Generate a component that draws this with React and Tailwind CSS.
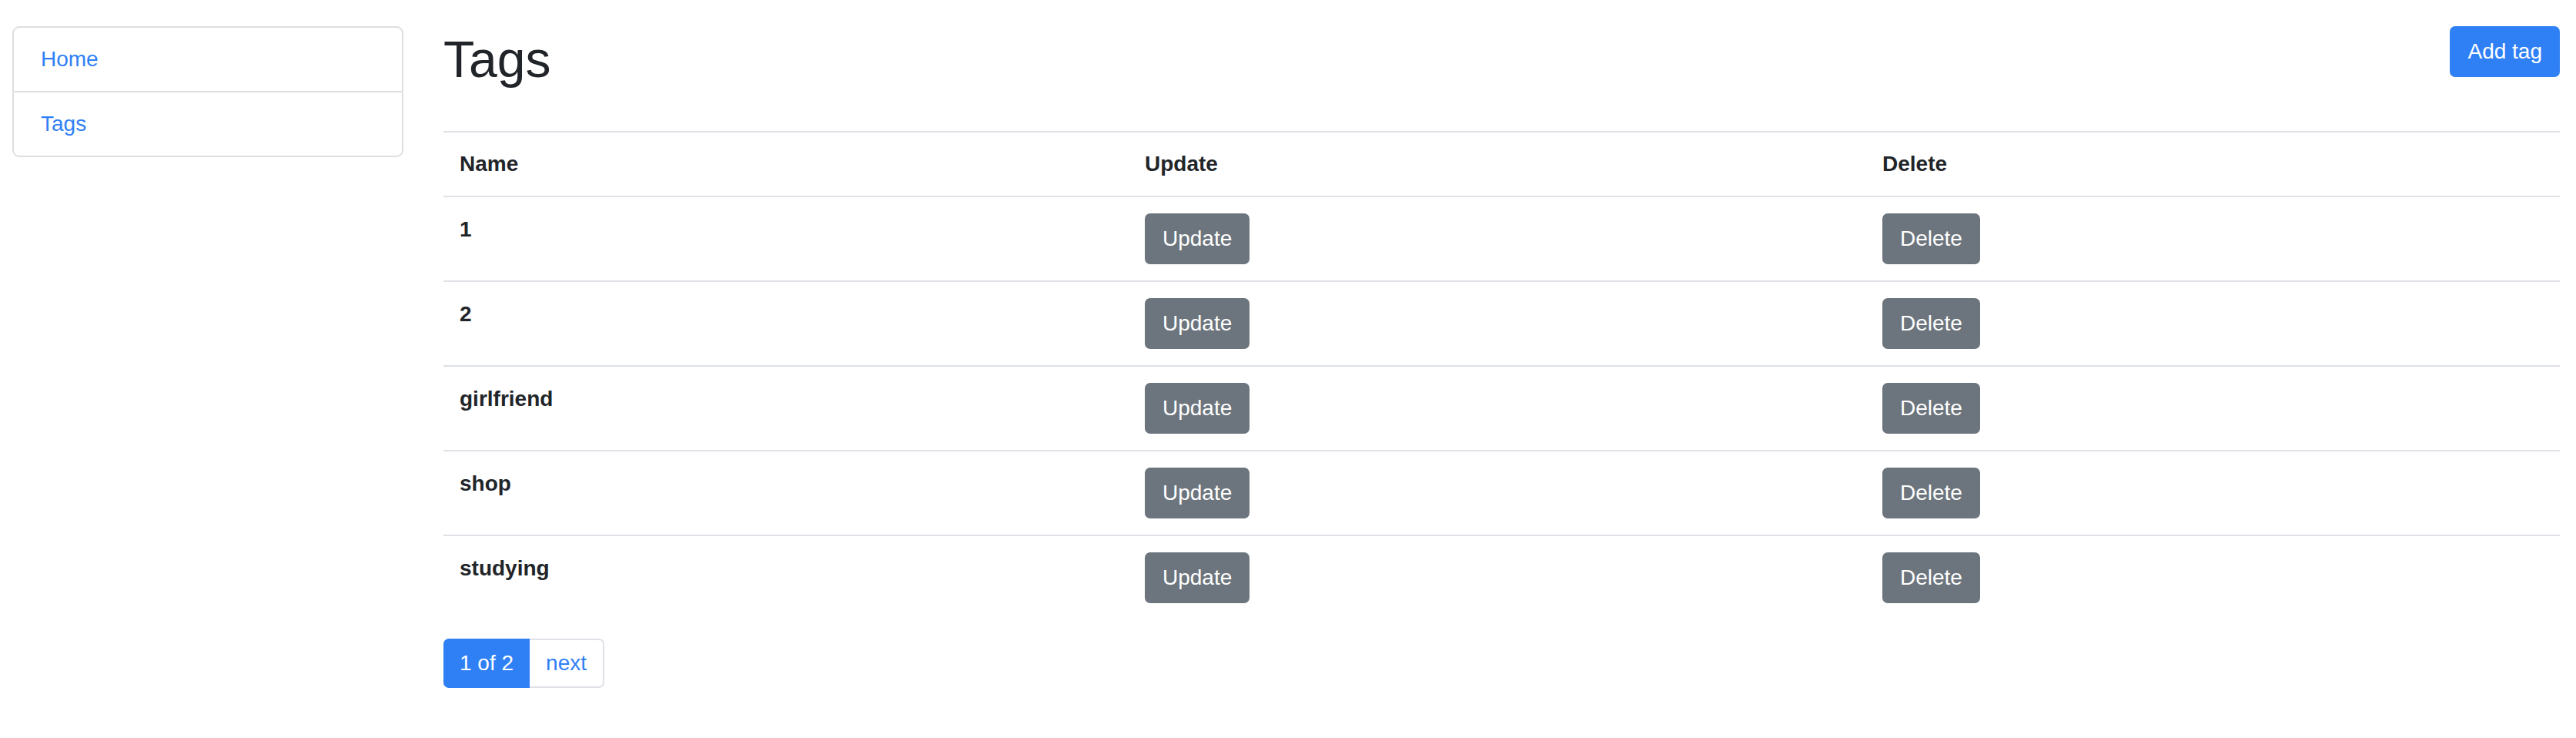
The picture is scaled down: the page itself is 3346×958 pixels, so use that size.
import React from 'react';

const tags = ["1", "2", "girlfriend", "shop", "studying"];

const App = () => {
  return (
    <div className="min-h-screen bg-white font-['Liberation_Sans',Arial,sans-serif] text-[#212529] text-[28px] leading-[42px]">
      <div className="flex gap-[52px] pl-[16px] pr-[21px] pt-[34px]">
        {/* sidebar */}
        <div className="w-[508px] shrink-0 self-start rounded-[9px] border-2 border-[#dfdfdf]">
          <a href="#" className="block px-[35px] py-[20px] text-[#3080f5]">Home</a>
          <a href="#" className="block border-t-2 border-[#dfdfdf] px-[35px] py-[20px] text-[#3080f5]">Tags</a>
        </div>

        {/* main */}
        <div className="flex-1">
          <div className="flex items-start justify-between">
            <h1 className="text-[66px] leading-[86px] font-medium">Tags</h1>
            <button className="h-[66px] rounded-[7px] border-2 border-[#3080f5] bg-[#3080f5] px-[21px] text-white">
              Add tag
            </button>
          </div>

          <table className="mt-[50px] w-full table-fixed border-collapse">
            <colgroup>
              <col className="w-[890px]" />
              <col className="w-[958px]" />
              <col />
            </colgroup>
            <thead>
              <tr>
                <th className="border-t-2 border-[#dee2e6] px-[21px] py-[20px] text-left font-bold">Name</th>
                <th className="border-t-2 border-[#dee2e6] px-[21px] py-[20px] text-left font-bold">Update</th>
                <th className="border-t-2 border-[#dee2e6] px-[21px] py-[20px] text-left font-bold">Delete</th>
              </tr>
            </thead>
            <tbody>
              {tags.map((tag) => (
                <tr key={tag}>
                  <td className="border-t-2 border-[#dee2e6] px-[21px] py-[21px] align-top font-bold">{tag}</td>
                  <td className="border-t-2 border-[#dee2e6] px-[21px] py-[21px] align-top">
                    <button className="h-[66px] rounded-[7px] border-2 border-[#6c757d] bg-[#6c757d] px-[21px] text-white">
                      Update
                    </button>
                  </td>
                  <td className="border-t-2 border-[#dee2e6] px-[21px] py-[21px] align-top">
                    <button className="h-[66px] rounded-[7px] border-2 border-[#6c757d] bg-[#6c757d] px-[21px] text-white">
                      Delete
                    </button>
                  </td>
                </tr>
              ))}
            </tbody>
          </table>

          {/* pagination */}
          <div className="mt-[25px] flex">
            <span className="flex h-[64px] items-center rounded-l-[7px] border-2 border-[#3080f5] bg-[#3080f5] px-[19px] text-white">
              1 of 2
            </span>
            <a href="#" className="flex h-[64px] items-center rounded-r-[7px] border-2 border-l-0 border-[#dee2e6] px-[21px] text-[#3080f5]">
              next
            </a>
          </div>
        </div>
      </div>
    </div>
  );
};

export default App;
